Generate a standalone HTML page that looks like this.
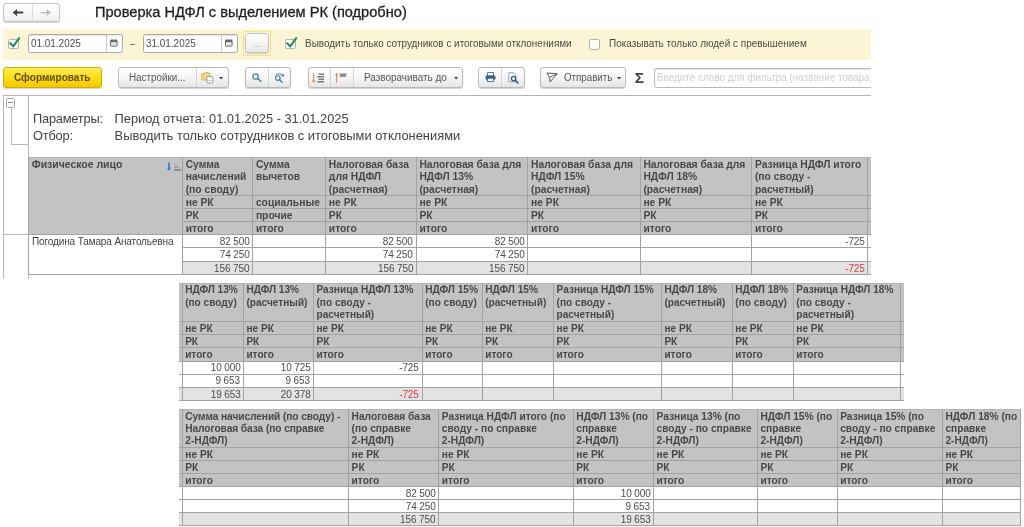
<!DOCTYPE html>
<html lang="ru"><head><meta charset="utf-8"><title>Проверка НДФЛ с выделением РК (подробно)</title>
<style>
html,body{margin:0;padding:0;background:#fff;}
body{width:1024px;height:527px;overflow:hidden;position:relative;font-family:"Liberation Sans",Arial,sans-serif;}
.p{position:absolute;overflow:hidden;}
.b{position:absolute;box-sizing:border-box;}
.t{position:absolute;white-space:nowrap;}
.w{position:absolute;width:1024px;height:527px;will-change:transform;filter:blur(0.4px);}
.btn{position:absolute;box-sizing:border-box;border:1px solid #b9b9b9;border-radius:3px;background:linear-gradient(#ffffff,#f4f4f4 55%,#e6e6e6);box-shadow:0 1px 1px rgba(0,0,0,.18);}
.inp{position:absolute;box-sizing:border-box;border:1px solid #a8a8a8;border-radius:2.5px;background:#fff;}
.cb{position:absolute;box-sizing:border-box;border:1px solid #b3b3b3;border-radius:2px;background:#fff;}
svg{position:absolute;overflow:visible;}
</style></head><body>

<div class="p" style="left:0;top:0;width:871px;height:279px;">
<div class="w" style="left:0;top:0;">
<div class="btn" style="left:3.3px;top:3.2px;width:56.5px;height:18.7px;border-color:#c2c2c2;background:linear-gradient(#ffffff,#f8f8f8 55%,#eeeeee);"></div>
<div class="b" style="left:31.70px;top:4.20px;width:1.00px;height:16.40px;background:#dcdcdc;"></div>
<svg style="left:12px;top:8px;" width="12" height="9" viewBox="0 0 12 9"><path d="M0.8 4.6 L5 0.9 V3.6 H11.2 V5.6 H5 V8.3 Z" fill="#3d3d3d"/></svg>
<svg style="left:40px;top:8px;" width="12" height="9" viewBox="0 0 12 9"><path d="M10.8 4.6 L6.8 1.2 V3.9 H0.6 V5.3 H6.8 V8 Z" fill="#b9b9b9"/></svg>
<div class="t" style="top:3.42px;font-size:14.328px;line-height:18.63px;color:#1f1f1f;left:94.90px;transform:scaleX(1.0204);transform-origin:0 0;-webkit-text-stroke:0.3px #1f1f1f;">Проверка НДФЛ с выделением РК (подробно)</div>
<div class="b" style="left:3.00px;top:29.00px;width:868.00px;height:30.50px;background:#fcf5d5;"></div>
<div class="cb" style="left:8.2px;top:39px;width:11.0px;height:10.399999999999999px;"></div>
<svg style="left:8.2px;top:36px;" width="14" height="14" viewBox="0 0 14 14"><path d="M2.2 7.2 L5.2 10.4 L11.2 2.2" fill="none" stroke="#1e8f55" stroke-width="2.1" stroke-linecap="round" stroke-linejoin="round"/></svg>
<div class="inp" style="left:28.2px;top:34px;width:94.39999999999999px;height:19px;box-shadow:inset 0 1px 1px rgba(0,0,0,.10);"></div>
<div class="b" style="left:105.70px;top:35.00px;width:1.00px;height:17.00px;background:#c9c9c9;"></div>
<div class="t" style="top:37.09px;font-size:10.547px;line-height:13.71px;color:#4c4c4c;left:31.20px;transform:scaleX(0.9434);transform-origin:0 0;">01.01.2025</div>
<svg style="left:109.6px;top:39.3px;" width="8" height="8" viewBox="0 0 8 8"><rect x="0.5" y="1.2" width="6.6" height="6" rx="0.8" fill="#e4e4e4" stroke="#6c6c6c" stroke-width="1"/><rect x="0.5" y="1.2" width="6.6" height="1.9" fill="#666"/><path d="M2 0.2 V1.4 M5.6 0.2 V1.4" stroke="#666" stroke-width="1"/></svg>
<div class="b" style="left:130.20px;top:43.50px;width:5.30px;height:1.20px;background:#7a7a7a;"></div>
<div class="inp" style="left:143.3px;top:34px;width:94.69999999999999px;height:19px;box-shadow:inset 0 1px 1px rgba(0,0,0,.10);"></div>
<div class="b" style="left:221.10px;top:35.00px;width:1.00px;height:17.00px;background:#c9c9c9;"></div>
<div class="t" style="top:37.09px;font-size:10.547px;line-height:13.71px;color:#4c4c4c;left:146.30px;transform:scaleX(0.9434);transform-origin:0 0;">31.01.2025</div>
<svg style="left:225.0px;top:39.3px;" width="8" height="8" viewBox="0 0 8 8"><rect x="0.5" y="1.2" width="6.6" height="6" rx="0.8" fill="#e4e4e4" stroke="#6c6c6c" stroke-width="1"/><rect x="0.5" y="1.2" width="6.6" height="1.9" fill="#666"/><path d="M2 0.2 V1.4 M5.6 0.2 V1.4" stroke="#666" stroke-width="1"/></svg>
<div class="b" style="left:243.00px;top:31.20px;width:27.80px;height:24.80px;border:1px solid #f3e27c;border-radius:1px;background:#fdf8dc;"></div>
<div class="btn" style="left:245.3px;top:33.3px;width:23.4px;height:20px;border-color:#c4c4c4;"></div>
<div class="t" style="top:38.13px;font-size:9.5px;line-height:12.35px;color:#b4b4b4;left:253.40px;">...</div>
<div class="cb" style="left:285.2px;top:39px;width:11.0px;height:10.399999999999999px;"></div>
<svg style="left:285.2px;top:36px;" width="14" height="14" viewBox="0 0 14 14"><path d="M2.2 7.2 L5.2 10.4 L11.2 2.2" fill="none" stroke="#1e8f55" stroke-width="2.1" stroke-linecap="round" stroke-linejoin="round"/></svg>
<div class="t" style="top:37.09px;font-size:10.547px;line-height:13.71px;color:#4a4a4a;left:304.90px;transform:scaleX(0.9434);transform-origin:0 0;">Выводить только сотрудников с итоговыми отклонениями</div>
<div class="cb" style="left:588.8px;top:39px;width:11.200000000000045px;height:10.799999999999997px;"></div>
<div class="t" style="top:37.05px;font-size:10.589px;line-height:13.77px;color:#4a4a4a;left:608.70px;transform:scaleX(0.9434);transform-origin:0 0;">Показывать только людей с превышением</div>
<div class="btn" style="left:3px;top:67.3px;width:98.6px;height:20.3px;border-color:#cfae00;background:linear-gradient(#ffee55,#fcdc14 50%,#f3c800);"></div>
<div class="t" style="top:70.88px;font-size:10.653px;line-height:13.85px;color:#5f4f16;font-weight:bold;left:13.75px;transform:scaleX(0.9434);transform-origin:0 0;">Сформировать</div>
<div class="btn" style="left:118px;top:67.3px;width:110.5px;height:20.3px;"></div>
<div class="b" style="left:195.60px;top:68.30px;width:1.00px;height:18.30px;background:#d4d4d4;"></div>
<div class="t" style="top:71.10px;font-size:10.441px;line-height:13.57px;color:#555;left:128.60px;transform:scaleX(0.9434);transform-origin:0 0;">Настройки...</div>
<svg style="left:200.6px;top:71px;" width="13" height="13" viewBox="0 0 13 13"><path d="M0.9 2.6 h2.6 l0.8 -1.2 h3 v1.2 h1.8 v6.4 h-8.2 z" fill="#f6dc9a" stroke="#d9a93f" stroke-width="0.9"/><path d="M3.2 3.2 v5.6 M5.6 2.4 v6.4" stroke="#e3b95a" stroke-width="0.7"/><rect x="5.9" y="5.4" width="6" height="6.6" rx="1" fill="#fff" stroke="#8a8f98" stroke-width="0.9"/><path d="M7.6 9.6 h2.6" stroke="#9aa0aa" stroke-width="0.8"/></svg>
<svg style="left:219.2px;top:77.4px;" width="4.2" height="2.4" viewBox="0 0 4.2 2.4"><path d="M0 0 H4.2 L2.1 2.4 Z" fill="#444"/></svg>
<div class="btn" style="left:245.3px;top:67.3px;width:45.4px;height:20.3px;"></div>
<div class="b" style="left:268.00px;top:68.30px;width:1.00px;height:18.30px;background:#d4d4d4;"></div>
<svg style="left:251.6px;top:73.3px;" width="10" height="9" viewBox="0 0 10 9"><circle cx="3.6" cy="3.5" r="2.6" fill="#fff" stroke="#3b7fa6" stroke-width="1.25"/><path d="M5.6 5.5 L8.8 8.3" stroke="#3b7fa6" stroke-width="1.5" stroke-linecap="round"/></svg>
<svg style="left:274.4px;top:72.6px;" width="11" height="10" viewBox="0 0 11 10"><circle cx="3.8" cy="5" r="2.3" fill="#fff" stroke="#3b7fa6" stroke-width="1.15"/><path d="M5.6 6.8 L8 9.3" stroke="#3b7fa6" stroke-width="1.4" stroke-linecap="round"/><path d="M1.6 1.9 C3.6 0.2 7 0.4 8.6 2.4" fill="none" stroke="#3b7fa6" stroke-width="1"/><path d="M10.2 1 L9.6 3.9 L7.2 2.6 Z" fill="#2f6f99"/></svg>
<div class="btn" style="left:307.6px;top:67.3px;width:155px;height:20.3px;"></div>
<div class="b" style="left:330.20px;top:68.30px;width:1.00px;height:18.30px;background:#d4d4d4;"></div>
<div class="b" style="left:353.00px;top:68.30px;width:1.00px;height:18.30px;background:#d4d4d4;"></div>
<svg style="left:312px;top:72.8px;" width="13" height="10" viewBox="0 0 13 10"><path d="M1.7 0.2 V9 M0.4 7.4 L1.7 9.5 L3 7.4" fill="none" stroke="#e2805a" stroke-width="1"/><path d="M6.6 1.2 h5.4 M5.2 3.7 h6.8 M6.6 6.2 h5.4 M5.2 8.7 h6.8" stroke="#7a7a7a" stroke-width="1.4"/></svg>
<svg style="left:335.2px;top:72.6px;" width="13" height="10" viewBox="0 0 13 10"><path d="M1.6 9.8 V0.8 M0.3 2.4 L1.6 0.3 L2.9 2.4" fill="none" stroke="#e2805a" stroke-width="1"/><path d="M4.8 1.1 h6.4 M4.8 3 h6.4" stroke="#6e6e6e" stroke-width="1.3"/></svg>
<div class="t" style="top:70.99px;font-size:10.547px;line-height:13.71px;color:#555;left:363.80px;transform:scaleX(0.9434);transform-origin:0 0;">Разворачивать до</div>
<svg style="left:453.6px;top:77.4px;" width="4.2" height="2.4" viewBox="0 0 4.2 2.4"><path d="M0 0 H4.2 L2.1 2.4 Z" fill="#444"/></svg>
<div class="btn" style="left:478.3px;top:67.3px;width:46.3px;height:20.3px;"></div>
<div class="b" style="left:501.20px;top:68.30px;width:1.00px;height:18.30px;background:#d4d4d4;"></div>
<svg style="left:484.8px;top:72px;" width="11" height="10" viewBox="0 0 11 10"><rect x="2.6" y="0.6" width="5.8" height="3.4" fill="#fff" stroke="#44658a" stroke-width="0.9"/><rect x="0.5" y="3.6" width="10" height="4.2" rx="1.2" fill="#3f628a"/><rect x="2.6" y="6.2" width="5.8" height="3.4" fill="#fff" stroke="#44658a" stroke-width="0.9"/></svg>
<svg style="left:507.8px;top:71.8px;" width="11" height="12" viewBox="0 0 11 12"><path d="M0.8 0.6 h4.6 l2.2 2.2 v7 h-6.8 z" fill="#fff" stroke="#8a8a8a" stroke-width="0.8"/><circle cx="5.6" cy="6.6" r="2.2" fill="#fff" stroke="#2d5c8c" stroke-width="1.4"/><path d="M7.3 8.3 L9.8 10.9" stroke="#2d5c8c" stroke-width="1.6" stroke-linecap="round"/></svg>
<div class="btn" style="left:539.8px;top:67.3px;width:86.2px;height:20.3px;"></div>
<svg style="left:546px;top:72.4px;" width="12" height="11" viewBox="0 0 12 11"><path d="M0.8 1 L11.2 1.8 L4 10 L3.6 5.2 Z M3.6 5.2 L11.2 1.8" fill="#fff" stroke="#5a5a5a" stroke-width="1" stroke-linejoin="round"/></svg>
<div class="t" style="top:71.20px;font-size:10.335px;line-height:13.44px;color:#555;left:564.00px;transform:scaleX(0.9434);transform-origin:0 0;">Отправить</div>
<svg style="left:617px;top:77.4px;" width="4.2" height="2.4" viewBox="0 0 4.2 2.4"><path d="M0 0 H4.2 L2.1 2.4 Z" fill="#444"/></svg>
<div class="t" style="top:68.15px;font-size:15.5px;line-height:20.15px;color:#39434f;font-weight:bold;left:634.70px;">Σ</div>
<div class="inp" style="left:653.7px;top:68px;width:260px;height:19.5px;border-color:#b8b8b8;box-shadow:inset 0 1px 1px rgba(0,0,0,.10);"></div>
<div class="t" style="top:71.04px;font-size:10.494px;line-height:13.64px;color:#cfcfcf;left:656.70px;transform:scaleX(0.9434);transform-origin:0 0;">Введите слово для фильтра (название товара,</div>
<div class="b" style="left:3.00px;top:94.50px;width:868.00px;height:1.00px;background:#b4b4b4;"></div>
<div class="b" style="left:2.50px;top:95.00px;width:1.00px;height:184.00px;background:#b4b4b4;"></div>
<div class="b" style="left:28.10px;top:95.00px;width:1.00px;height:184.00px;background:#b4b4b4;"></div>
<div class="b" style="left:5.90px;top:97.60px;width:9.50px;height:10.20px;border:1px solid #a5a5a5;border-radius:1.5px;background:#fff;"></div>
<div class="b" style="left:7.80px;top:102.00px;width:5.70px;height:1.40px;background:#858585;"></div>
<div class="b" style="left:10.90px;top:107.50px;width:1.00px;height:37.10px;background:#b9b9b9;"></div>
<div class="b" style="left:10.90px;top:143.70px;width:17.70px;height:1.00px;background:#b9b9b9;"></div>
<div class="t" style="top:110.94px;font-size:12.8px;line-height:16.64px;color:#424242;letter-spacing:-0.200px;left:33.00px;">Параметры:</div>
<div class="t" style="top:110.94px;font-size:12.8px;line-height:16.64px;color:#424242;left:114.60px;">Период отчета: 01.01.2025 - 31.01.2025</div>
<div class="t" style="top:128.44px;font-size:12.8px;line-height:16.64px;color:#424242;letter-spacing:-0.200px;left:33.00px;">Отбор:</div>
<div class="t" style="top:128.37px;font-size:12.88px;line-height:16.74px;color:#424242;left:114.60px;">Выводить только сотрудников с итоговыми отклонениями</div>
<div class="b" style="left:28.60px;top:156.70px;width:842.40px;height:77.90px;background:#c3c3c3;"></div>
<div class="b" style="left:182.50px;top:261.20px;width:688.50px;height:13.20px;background:#e3e3e3;"></div>
<div class="b" style="left:28.60px;top:156.70px;width:842.40px;height:1.00px;background:#b4b4b4;"></div>
<div class="b" style="left:182.50px;top:195.10px;width:688.50px;height:1.00px;background:#a2a2a2;"></div>
<div class="b" style="left:182.50px;top:208.30px;width:688.50px;height:1.00px;background:#a2a2a2;"></div>
<div class="b" style="left:182.50px;top:221.40px;width:688.50px;height:1.00px;background:#a2a2a2;"></div>
<div class="b" style="left:28.60px;top:234.10px;width:842.40px;height:1.00px;background:#a2a2a2;"></div>
<div class="b" style="left:182.50px;top:247.10px;width:688.50px;height:1.00px;background:#a2a2a2;"></div>
<div class="b" style="left:182.50px;top:260.70px;width:688.50px;height:1.00px;background:#a2a2a2;"></div>
<div class="b" style="left:28.60px;top:273.90px;width:842.40px;height:1.00px;background:#a2a2a2;"></div>
<div class="b" style="left:28.10px;top:157.20px;width:1.00px;height:117.20px;background:#a2a2a2;"></div>
<div class="b" style="left:182.00px;top:157.20px;width:1.00px;height:117.20px;background:#a2a2a2;"></div>
<div class="b" style="left:252.20px;top:157.20px;width:1.00px;height:117.20px;background:#a2a2a2;"></div>
<div class="b" style="left:325.15px;top:157.20px;width:1.00px;height:117.20px;background:#a2a2a2;"></div>
<div class="b" style="left:415.70px;top:157.20px;width:1.00px;height:117.20px;background:#a2a2a2;"></div>
<div class="b" style="left:527.30px;top:157.20px;width:1.00px;height:117.20px;background:#a2a2a2;"></div>
<div class="b" style="left:639.70px;top:157.20px;width:1.00px;height:117.20px;background:#a2a2a2;"></div>
<div class="b" style="left:751.25px;top:157.20px;width:1.00px;height:117.20px;background:#a2a2a2;"></div>
<div class="b" style="left:867.00px;top:157.20px;width:1.00px;height:117.20px;background:#a2a2a2;"></div>
<div class="t" style="top:157.59px;font-size:10.45px;line-height:13.58px;color:#484848;font-weight:bold;left:31.80px;">Физическое лицо</div>
<div class="t" style="top:158.14px;font-size:10.3px;line-height:13.39px;color:#484848;font-weight:bold;left:185.70px;">Сумма</div>
<div class="t" style="top:170.44px;font-size:10.3px;line-height:13.39px;color:#484848;font-weight:bold;left:185.70px;">начислений</div>
<div class="t" style="top:182.74px;font-size:10.3px;line-height:13.39px;color:#484848;font-weight:bold;left:185.70px;">(по своду)</div>
<div class="t" style="top:196.14px;font-size:10.3px;line-height:13.39px;color:#484848;font-weight:bold;left:185.70px;">не РК</div>
<div class="t" style="top:209.34px;font-size:10.3px;line-height:13.39px;color:#484848;font-weight:bold;left:185.70px;">РК</div>
<div class="t" style="top:222.44px;font-size:10.3px;line-height:13.39px;color:#484848;font-weight:bold;left:185.70px;">итого</div>
<div class="t" style="top:158.14px;font-size:10.3px;line-height:13.39px;color:#484848;font-weight:bold;left:255.90px;">Сумма</div>
<div class="t" style="top:170.44px;font-size:10.3px;line-height:13.39px;color:#484848;font-weight:bold;left:255.90px;">вычетов</div>
<div class="t" style="top:196.14px;font-size:10.3px;line-height:13.39px;color:#484848;font-weight:bold;left:255.90px;">социальные</div>
<div class="t" style="top:209.34px;font-size:10.3px;line-height:13.39px;color:#484848;font-weight:bold;left:255.90px;">прочие</div>
<div class="t" style="top:222.44px;font-size:10.3px;line-height:13.39px;color:#484848;font-weight:bold;left:255.90px;">итого</div>
<div class="t" style="top:158.14px;font-size:10.3px;line-height:13.39px;color:#484848;font-weight:bold;left:328.85px;">Налоговая база</div>
<div class="t" style="top:170.44px;font-size:10.3px;line-height:13.39px;color:#484848;font-weight:bold;left:328.85px;">для НДФЛ</div>
<div class="t" style="top:182.74px;font-size:10.3px;line-height:13.39px;color:#484848;font-weight:bold;left:328.85px;">(расчетная)</div>
<div class="t" style="top:196.14px;font-size:10.3px;line-height:13.39px;color:#484848;font-weight:bold;left:328.85px;">не РК</div>
<div class="t" style="top:209.34px;font-size:10.3px;line-height:13.39px;color:#484848;font-weight:bold;left:328.85px;">РК</div>
<div class="t" style="top:222.44px;font-size:10.3px;line-height:13.39px;color:#484848;font-weight:bold;left:328.85px;">итого</div>
<div class="t" style="top:158.14px;font-size:10.3px;line-height:13.39px;color:#484848;font-weight:bold;left:419.40px;">Налоговая база для</div>
<div class="t" style="top:170.44px;font-size:10.3px;line-height:13.39px;color:#484848;font-weight:bold;left:419.40px;">НДФЛ 13%</div>
<div class="t" style="top:182.74px;font-size:10.3px;line-height:13.39px;color:#484848;font-weight:bold;left:419.40px;">(расчетная)</div>
<div class="t" style="top:196.14px;font-size:10.3px;line-height:13.39px;color:#484848;font-weight:bold;left:419.40px;">не РК</div>
<div class="t" style="top:209.34px;font-size:10.3px;line-height:13.39px;color:#484848;font-weight:bold;left:419.40px;">РК</div>
<div class="t" style="top:222.44px;font-size:10.3px;line-height:13.39px;color:#484848;font-weight:bold;left:419.40px;">итого</div>
<div class="t" style="top:158.14px;font-size:10.3px;line-height:13.39px;color:#484848;font-weight:bold;left:531.00px;">Налоговая база для</div>
<div class="t" style="top:170.44px;font-size:10.3px;line-height:13.39px;color:#484848;font-weight:bold;left:531.00px;">НДФЛ 15%</div>
<div class="t" style="top:182.74px;font-size:10.3px;line-height:13.39px;color:#484848;font-weight:bold;left:531.00px;">(расчетная)</div>
<div class="t" style="top:196.14px;font-size:10.3px;line-height:13.39px;color:#484848;font-weight:bold;left:531.00px;">не РК</div>
<div class="t" style="top:209.34px;font-size:10.3px;line-height:13.39px;color:#484848;font-weight:bold;left:531.00px;">РК</div>
<div class="t" style="top:222.44px;font-size:10.3px;line-height:13.39px;color:#484848;font-weight:bold;left:531.00px;">итого</div>
<div class="t" style="top:158.14px;font-size:10.3px;line-height:13.39px;color:#484848;font-weight:bold;left:643.40px;">Налоговая база для</div>
<div class="t" style="top:170.44px;font-size:10.3px;line-height:13.39px;color:#484848;font-weight:bold;left:643.40px;">НДФЛ 18%</div>
<div class="t" style="top:182.74px;font-size:10.3px;line-height:13.39px;color:#484848;font-weight:bold;left:643.40px;">(расчетная)</div>
<div class="t" style="top:196.14px;font-size:10.3px;line-height:13.39px;color:#484848;font-weight:bold;left:643.40px;">не РК</div>
<div class="t" style="top:209.34px;font-size:10.3px;line-height:13.39px;color:#484848;font-weight:bold;left:643.40px;">РК</div>
<div class="t" style="top:222.44px;font-size:10.3px;line-height:13.39px;color:#484848;font-weight:bold;left:643.40px;">итого</div>
<div class="t" style="top:158.14px;font-size:10.3px;line-height:13.39px;color:#484848;font-weight:bold;left:754.95px;">Разница НДФЛ итого</div>
<div class="t" style="top:170.44px;font-size:10.3px;line-height:13.39px;color:#484848;font-weight:bold;left:754.95px;">(по своду -</div>
<div class="t" style="top:182.74px;font-size:10.3px;line-height:13.39px;color:#484848;font-weight:bold;left:754.95px;">расчетный)</div>
<div class="t" style="top:196.14px;font-size:10.3px;line-height:13.39px;color:#484848;font-weight:bold;left:754.95px;">не РК</div>
<div class="t" style="top:209.34px;font-size:10.3px;line-height:13.39px;color:#484848;font-weight:bold;left:754.95px;">РК</div>
<div class="t" style="top:222.44px;font-size:10.3px;line-height:13.39px;color:#484848;font-weight:bold;left:754.95px;">итого</div>
<div class="t" style="top:158.14px;font-size:10.3px;line-height:13.39px;color:#484848;font-weight:bold;left:870.70px;"></div>
<div class="t" style="top:170.44px;font-size:10.3px;line-height:13.39px;color:#484848;font-weight:bold;left:870.70px;">(</div>
<div class="t" style="top:234.94px;font-size:10.6px;line-height:13.78px;color:#3f3f3f;letter-spacing:-0.127px;left:32.10px;transform:scaleX(0.9434);transform-origin:0 0;">Погодина Тамара Анатольевна</div>
<div class="t" style="top:234.94px;font-size:10.6px;line-height:13.78px;color:#4c4c4c;letter-spacing:-0.127px;right:774.50px;text-align:right;transform:scaleX(0.9434);transform-origin:100% 0;">82 500</div>
<div class="t" style="top:234.94px;font-size:10.6px;line-height:13.78px;color:#4c4c4c;letter-spacing:-0.127px;right:611.00px;text-align:right;transform:scaleX(0.9434);transform-origin:100% 0;">82 500</div>
<div class="t" style="top:234.94px;font-size:10.6px;line-height:13.78px;color:#4c4c4c;letter-spacing:-0.127px;right:499.40px;text-align:right;transform:scaleX(0.9434);transform-origin:100% 0;">82 500</div>
<div class="t" style="top:234.94px;font-size:10.6px;line-height:13.78px;color:#4c4c4c;letter-spacing:-0.127px;right:159.70px;text-align:right;transform:scaleX(0.9434);transform-origin:100% 0;">-725</div>
<div class="t" style="top:247.94px;font-size:10.6px;line-height:13.78px;color:#4c4c4c;letter-spacing:-0.127px;right:774.50px;text-align:right;transform:scaleX(0.9434);transform-origin:100% 0;">74 250</div>
<div class="t" style="top:247.94px;font-size:10.6px;line-height:13.78px;color:#4c4c4c;letter-spacing:-0.127px;right:611.00px;text-align:right;transform:scaleX(0.9434);transform-origin:100% 0;">74 250</div>
<div class="t" style="top:247.94px;font-size:10.6px;line-height:13.78px;color:#4c4c4c;letter-spacing:-0.127px;right:499.40px;text-align:right;transform:scaleX(0.9434);transform-origin:100% 0;">74 250</div>
<div class="t" style="top:261.54px;font-size:10.6px;line-height:13.78px;color:#4c4c4c;letter-spacing:-0.127px;right:774.50px;text-align:right;transform:scaleX(0.9434);transform-origin:100% 0;">156 750</div>
<div class="t" style="top:261.54px;font-size:10.6px;line-height:13.78px;color:#4c4c4c;letter-spacing:-0.127px;right:611.00px;text-align:right;transform:scaleX(0.9434);transform-origin:100% 0;">156 750</div>
<div class="t" style="top:261.54px;font-size:10.6px;line-height:13.78px;color:#4c4c4c;letter-spacing:-0.127px;right:499.40px;text-align:right;transform:scaleX(0.9434);transform-origin:100% 0;">156 750</div>
<div class="t" style="top:261.54px;font-size:10.6px;line-height:13.78px;color:#e0393e;letter-spacing:-0.127px;right:159.70px;text-align:right;transform:scaleX(0.9434);transform-origin:100% 0;">-725</div>
<div class="b" style="left:3.00px;top:234.10px;width:26.00px;height:1.00px;background:#b4b4b4;"></div>
<svg style="left:166.6px;top:162.4px;" width="15" height="10" viewBox="0 0 15 10"><path d="M2 0.4 V7.6" fill="none" stroke="#3580c6" stroke-width="1.7"/><path d="M0 5.8 H4 L2 8.9 Z" fill="#3580c6"/><path d="M7.4 0.6 h1.4" stroke="#aaa" stroke-width="0.8"/><path d="M7.4 2.8 h2.8" stroke="#a0a0a0" stroke-width="0.9"/><path d="M7.4 5.2 h4.6" stroke="#8c8c8c" stroke-width="1"/><path d="M7.2 7.9 h7" stroke="#707070" stroke-width="1.3"/></svg>
</div></div>
<div class="p" style="left:179.3px;top:282.7px;width:724.7px;height:118.1px;">
<div class="w" style="left:-179.3px;top:-282.7px;">
<div class="b" style="left:179.00px;top:282.70px;width:725.00px;height:78.30px;background:#c3c3c3;"></div>
<div class="b" style="left:179.00px;top:387.20px;width:725.00px;height:13.10px;background:#e3e3e3;"></div>
<div class="b" style="left:179.00px;top:282.70px;width:725.00px;height:1.00px;background:#b4b4b4;"></div>
<div class="b" style="left:179.00px;top:320.80px;width:725.00px;height:1.00px;background:#a2a2a2;"></div>
<div class="b" style="left:179.00px;top:334.00px;width:725.00px;height:1.00px;background:#a2a2a2;"></div>
<div class="b" style="left:179.00px;top:347.40px;width:725.00px;height:1.00px;background:#a2a2a2;"></div>
<div class="b" style="left:179.00px;top:360.50px;width:725.00px;height:1.00px;background:#a2a2a2;"></div>
<div class="b" style="left:179.00px;top:373.50px;width:725.00px;height:1.00px;background:#a2a2a2;"></div>
<div class="b" style="left:179.00px;top:386.70px;width:725.00px;height:1.00px;background:#a2a2a2;"></div>
<div class="b" style="left:179.00px;top:399.80px;width:725.00px;height:1.00px;background:#a2a2a2;"></div>
<div class="b" style="left:182.15px;top:283.20px;width:1.00px;height:117.10px;background:#a2a2a2;"></div>
<div class="b" style="left:242.90px;top:283.20px;width:1.00px;height:117.10px;background:#a2a2a2;"></div>
<div class="b" style="left:313.00px;top:283.20px;width:1.00px;height:117.10px;background:#a2a2a2;"></div>
<div class="b" style="left:421.70px;top:283.20px;width:1.00px;height:117.10px;background:#a2a2a2;"></div>
<div class="b" style="left:481.70px;top:283.20px;width:1.00px;height:117.10px;background:#a2a2a2;"></div>
<div class="b" style="left:553.10px;top:283.20px;width:1.00px;height:117.10px;background:#a2a2a2;"></div>
<div class="b" style="left:660.90px;top:283.20px;width:1.00px;height:117.10px;background:#a2a2a2;"></div>
<div class="b" style="left:731.80px;top:283.20px;width:1.00px;height:117.10px;background:#a2a2a2;"></div>
<div class="b" style="left:792.80px;top:283.20px;width:1.00px;height:117.10px;background:#a2a2a2;"></div>
<div class="b" style="left:900.30px;top:283.20px;width:1.00px;height:117.10px;background:#a2a2a2;"></div>
<div class="t" style="top:283.44px;font-size:10.1px;line-height:13.13px;color:#484848;font-weight:bold;left:185.15px;">НДФЛ 13%</div>
<div class="t" style="top:295.94px;font-size:10.1px;line-height:13.13px;color:#484848;font-weight:bold;left:185.15px;">(по своду)</div>
<div class="t" style="top:321.64px;font-size:10.1px;line-height:13.13px;color:#484848;font-weight:bold;left:185.15px;">не РК</div>
<div class="t" style="top:334.84px;font-size:10.1px;line-height:13.13px;color:#484848;font-weight:bold;left:185.15px;">РК</div>
<div class="t" style="top:348.24px;font-size:10.1px;line-height:13.13px;color:#484848;font-weight:bold;left:185.15px;">итого</div>
<div class="t" style="top:283.44px;font-size:10.1px;line-height:13.13px;color:#484848;font-weight:bold;left:246.40px;">НДФЛ 13%</div>
<div class="t" style="top:295.94px;font-size:10.1px;line-height:13.13px;color:#484848;font-weight:bold;left:246.40px;">(расчетный)</div>
<div class="t" style="top:321.64px;font-size:10.1px;line-height:13.13px;color:#484848;font-weight:bold;left:246.40px;">не РК</div>
<div class="t" style="top:334.84px;font-size:10.1px;line-height:13.13px;color:#484848;font-weight:bold;left:246.40px;">РК</div>
<div class="t" style="top:348.24px;font-size:10.1px;line-height:13.13px;color:#484848;font-weight:bold;left:246.40px;">итого</div>
<div class="t" style="top:283.44px;font-size:10.1px;line-height:13.13px;color:#484848;font-weight:bold;left:316.50px;">Разница НДФЛ 13%</div>
<div class="t" style="top:295.94px;font-size:10.1px;line-height:13.13px;color:#484848;font-weight:bold;left:316.50px;">(по своду -</div>
<div class="t" style="top:308.44px;font-size:10.1px;line-height:13.13px;color:#484848;font-weight:bold;left:316.50px;">расчетный)</div>
<div class="t" style="top:321.64px;font-size:10.1px;line-height:13.13px;color:#484848;font-weight:bold;left:316.50px;">не РК</div>
<div class="t" style="top:334.84px;font-size:10.1px;line-height:13.13px;color:#484848;font-weight:bold;left:316.50px;">РК</div>
<div class="t" style="top:348.24px;font-size:10.1px;line-height:13.13px;color:#484848;font-weight:bold;left:316.50px;">итого</div>
<div class="t" style="top:283.44px;font-size:10.1px;line-height:13.13px;color:#484848;font-weight:bold;left:425.20px;">НДФЛ 15%</div>
<div class="t" style="top:295.94px;font-size:10.1px;line-height:13.13px;color:#484848;font-weight:bold;left:425.20px;">(по своду)</div>
<div class="t" style="top:321.64px;font-size:10.1px;line-height:13.13px;color:#484848;font-weight:bold;left:425.20px;">не РК</div>
<div class="t" style="top:334.84px;font-size:10.1px;line-height:13.13px;color:#484848;font-weight:bold;left:425.20px;">РК</div>
<div class="t" style="top:348.24px;font-size:10.1px;line-height:13.13px;color:#484848;font-weight:bold;left:425.20px;">итого</div>
<div class="t" style="top:283.44px;font-size:10.1px;line-height:13.13px;color:#484848;font-weight:bold;left:485.20px;">НДФЛ 15%</div>
<div class="t" style="top:295.94px;font-size:10.1px;line-height:13.13px;color:#484848;font-weight:bold;left:485.20px;">(расчетный)</div>
<div class="t" style="top:321.64px;font-size:10.1px;line-height:13.13px;color:#484848;font-weight:bold;left:485.20px;">не РК</div>
<div class="t" style="top:334.84px;font-size:10.1px;line-height:13.13px;color:#484848;font-weight:bold;left:485.20px;">РК</div>
<div class="t" style="top:348.24px;font-size:10.1px;line-height:13.13px;color:#484848;font-weight:bold;left:485.20px;">итого</div>
<div class="t" style="top:283.44px;font-size:10.1px;line-height:13.13px;color:#484848;font-weight:bold;left:556.60px;">Разница НДФЛ 15%</div>
<div class="t" style="top:295.94px;font-size:10.1px;line-height:13.13px;color:#484848;font-weight:bold;left:556.60px;">(по своду -</div>
<div class="t" style="top:308.44px;font-size:10.1px;line-height:13.13px;color:#484848;font-weight:bold;left:556.60px;">расчетный)</div>
<div class="t" style="top:321.64px;font-size:10.1px;line-height:13.13px;color:#484848;font-weight:bold;left:556.60px;">не РК</div>
<div class="t" style="top:334.84px;font-size:10.1px;line-height:13.13px;color:#484848;font-weight:bold;left:556.60px;">РК</div>
<div class="t" style="top:348.24px;font-size:10.1px;line-height:13.13px;color:#484848;font-weight:bold;left:556.60px;">итого</div>
<div class="t" style="top:283.44px;font-size:10.1px;line-height:13.13px;color:#484848;font-weight:bold;left:664.40px;">НДФЛ 18%</div>
<div class="t" style="top:295.94px;font-size:10.1px;line-height:13.13px;color:#484848;font-weight:bold;left:664.40px;">(расчетный)</div>
<div class="t" style="top:321.64px;font-size:10.1px;line-height:13.13px;color:#484848;font-weight:bold;left:664.40px;">не РК</div>
<div class="t" style="top:334.84px;font-size:10.1px;line-height:13.13px;color:#484848;font-weight:bold;left:664.40px;">РК</div>
<div class="t" style="top:348.24px;font-size:10.1px;line-height:13.13px;color:#484848;font-weight:bold;left:664.40px;">итого</div>
<div class="t" style="top:283.44px;font-size:10.1px;line-height:13.13px;color:#484848;font-weight:bold;left:735.30px;">НДФЛ 18%</div>
<div class="t" style="top:295.94px;font-size:10.1px;line-height:13.13px;color:#484848;font-weight:bold;left:735.30px;">(по своду)</div>
<div class="t" style="top:321.64px;font-size:10.1px;line-height:13.13px;color:#484848;font-weight:bold;left:735.30px;">не РК</div>
<div class="t" style="top:334.84px;font-size:10.1px;line-height:13.13px;color:#484848;font-weight:bold;left:735.30px;">РК</div>
<div class="t" style="top:348.24px;font-size:10.1px;line-height:13.13px;color:#484848;font-weight:bold;left:735.30px;">итого</div>
<div class="t" style="top:283.44px;font-size:10.1px;line-height:13.13px;color:#484848;font-weight:bold;left:796.30px;">Разница НДФЛ 18%</div>
<div class="t" style="top:295.94px;font-size:10.1px;line-height:13.13px;color:#484848;font-weight:bold;left:796.30px;">(по своду -</div>
<div class="t" style="top:308.44px;font-size:10.1px;line-height:13.13px;color:#484848;font-weight:bold;left:796.30px;">расчетный)</div>
<div class="t" style="top:321.64px;font-size:10.1px;line-height:13.13px;color:#484848;font-weight:bold;left:796.30px;">не РК</div>
<div class="t" style="top:334.84px;font-size:10.1px;line-height:13.13px;color:#484848;font-weight:bold;left:796.30px;">РК</div>
<div class="t" style="top:348.24px;font-size:10.1px;line-height:13.13px;color:#484848;font-weight:bold;left:796.30px;">итого</div>
<div class="t" style="top:283.44px;font-size:10.1px;line-height:13.13px;color:#484848;font-weight:bold;left:903.80px;">С</div>
<div class="t" style="top:295.94px;font-size:10.1px;line-height:13.13px;color:#484848;font-weight:bold;left:903.80px;">Н</div>
<div class="t" style="top:308.44px;font-size:10.1px;line-height:13.13px;color:#484848;font-weight:bold;left:903.80px;">2</div>
<div class="t" style="top:361.34px;font-size:10.6px;line-height:13.78px;color:#4c4c4c;letter-spacing:-0.127px;right:783.80px;text-align:right;transform:scaleX(0.9434);transform-origin:100% 0;">10 000</div>
<div class="t" style="top:361.34px;font-size:10.6px;line-height:13.78px;color:#4c4c4c;letter-spacing:-0.127px;right:713.70px;text-align:right;transform:scaleX(0.9434);transform-origin:100% 0;">10 725</div>
<div class="t" style="top:361.34px;font-size:10.6px;line-height:13.78px;color:#4c4c4c;letter-spacing:-0.127px;right:605.00px;text-align:right;transform:scaleX(0.9434);transform-origin:100% 0;">-725</div>
<div class="t" style="top:374.34px;font-size:10.6px;line-height:13.78px;color:#4c4c4c;letter-spacing:-0.127px;right:783.80px;text-align:right;transform:scaleX(0.9434);transform-origin:100% 0;">9 653</div>
<div class="t" style="top:374.34px;font-size:10.6px;line-height:13.78px;color:#4c4c4c;letter-spacing:-0.127px;right:713.70px;text-align:right;transform:scaleX(0.9434);transform-origin:100% 0;">9 653</div>
<div class="t" style="top:387.54px;font-size:10.6px;line-height:13.78px;color:#4c4c4c;letter-spacing:-0.127px;right:783.80px;text-align:right;transform:scaleX(0.9434);transform-origin:100% 0;">19 653</div>
<div class="t" style="top:387.54px;font-size:10.6px;line-height:13.78px;color:#4c4c4c;letter-spacing:-0.127px;right:713.70px;text-align:right;transform:scaleX(0.9434);transform-origin:100% 0;">20 378</div>
<div class="t" style="top:387.54px;font-size:10.6px;line-height:13.78px;color:#e0393e;letter-spacing:-0.127px;right:605.00px;text-align:right;transform:scaleX(0.9434);transform-origin:100% 0;">-725</div>
</div></div>
<div class="p" style="left:179.3px;top:408.5px;width:842px;height:117.5px;">
<div class="w" style="left:-179.3px;top:-408.5px;">
<div class="b" style="left:179.00px;top:408.50px;width:842.00px;height:78.30px;background:#c3c3c3;"></div>
<div class="b" style="left:179.00px;top:512.50px;width:842.00px;height:12.50px;background:#e3e3e3;"></div>
<div class="b" style="left:179.00px;top:408.50px;width:842.00px;height:1.00px;background:#b4b4b4;"></div>
<div class="b" style="left:179.00px;top:446.80px;width:842.00px;height:1.00px;background:#a2a2a2;"></div>
<div class="b" style="left:179.00px;top:460.00px;width:842.00px;height:1.00px;background:#a2a2a2;"></div>
<div class="b" style="left:179.00px;top:473.20px;width:842.00px;height:1.00px;background:#a2a2a2;"></div>
<div class="b" style="left:179.00px;top:486.30px;width:842.00px;height:1.00px;background:#a2a2a2;"></div>
<div class="b" style="left:179.00px;top:499.10px;width:842.00px;height:1.00px;background:#a2a2a2;"></div>
<div class="b" style="left:179.00px;top:512.00px;width:842.00px;height:1.00px;background:#a2a2a2;"></div>
<div class="b" style="left:179.00px;top:524.50px;width:842.00px;height:1.00px;background:#a2a2a2;"></div>
<div class="b" style="left:182.15px;top:409.00px;width:1.00px;height:116.00px;background:#a2a2a2;"></div>
<div class="b" style="left:348.00px;top:409.00px;width:1.00px;height:116.00px;background:#a2a2a2;"></div>
<div class="b" style="left:438.20px;top:409.00px;width:1.00px;height:116.00px;background:#a2a2a2;"></div>
<div class="b" style="left:572.70px;top:409.00px;width:1.00px;height:116.00px;background:#a2a2a2;"></div>
<div class="b" style="left:652.90px;top:409.00px;width:1.00px;height:116.00px;background:#a2a2a2;"></div>
<div class="b" style="left:756.80px;top:409.00px;width:1.00px;height:116.00px;background:#a2a2a2;"></div>
<div class="b" style="left:836.60px;top:409.00px;width:1.00px;height:116.00px;background:#a2a2a2;"></div>
<div class="b" style="left:941.80px;top:409.00px;width:1.00px;height:116.00px;background:#a2a2a2;"></div>
<div class="b" style="left:1020.30px;top:409.00px;width:1.00px;height:116.00px;background:#a2a2a2;"></div>
<div class="t" style="top:410.04px;font-size:10.2px;line-height:13.26px;color:#484848;font-weight:bold;letter-spacing:-0.090px;left:185.25px;">Сумма начислений (по своду) -</div>
<div class="t" style="top:421.94px;font-size:10.2px;line-height:13.26px;color:#484848;font-weight:bold;letter-spacing:-0.090px;left:185.25px;">Налоговая база (по справке</div>
<div class="t" style="top:433.84px;font-size:10.2px;line-height:13.26px;color:#484848;font-weight:bold;left:185.25px;">2-НДФЛ)</div>
<div class="t" style="top:447.54px;font-size:10.2px;line-height:13.26px;color:#484848;font-weight:bold;left:185.25px;">не РК</div>
<div class="t" style="top:460.74px;font-size:10.2px;line-height:13.26px;color:#484848;font-weight:bold;left:185.25px;">РК</div>
<div class="t" style="top:473.94px;font-size:10.2px;line-height:13.26px;color:#484848;font-weight:bold;left:185.25px;">итого</div>
<div class="t" style="top:410.04px;font-size:10.2px;line-height:13.26px;color:#484848;font-weight:bold;left:351.60px;">Налоговая база</div>
<div class="t" style="top:421.94px;font-size:10.2px;line-height:13.26px;color:#484848;font-weight:bold;left:351.60px;">(по справке</div>
<div class="t" style="top:433.84px;font-size:10.2px;line-height:13.26px;color:#484848;font-weight:bold;left:351.60px;">2-НДФЛ)</div>
<div class="t" style="top:447.54px;font-size:10.2px;line-height:13.26px;color:#484848;font-weight:bold;left:351.60px;">не РК</div>
<div class="t" style="top:460.74px;font-size:10.2px;line-height:13.26px;color:#484848;font-weight:bold;left:351.60px;">РК</div>
<div class="t" style="top:473.94px;font-size:10.2px;line-height:13.26px;color:#484848;font-weight:bold;left:351.60px;">итого</div>
<div class="t" style="top:410.04px;font-size:10.2px;line-height:13.26px;color:#484848;font-weight:bold;left:441.80px;">Разница НДФЛ итого (по</div>
<div class="t" style="top:421.94px;font-size:10.2px;line-height:13.26px;color:#484848;font-weight:bold;left:441.80px;">своду - по справке</div>
<div class="t" style="top:433.84px;font-size:10.2px;line-height:13.26px;color:#484848;font-weight:bold;left:441.80px;">2-НДФЛ)</div>
<div class="t" style="top:447.54px;font-size:10.2px;line-height:13.26px;color:#484848;font-weight:bold;left:441.80px;">не РК</div>
<div class="t" style="top:460.74px;font-size:10.2px;line-height:13.26px;color:#484848;font-weight:bold;left:441.80px;">РК</div>
<div class="t" style="top:473.94px;font-size:10.2px;line-height:13.26px;color:#484848;font-weight:bold;left:441.80px;">итого</div>
<div class="t" style="top:410.04px;font-size:10.2px;line-height:13.26px;color:#484848;font-weight:bold;left:576.30px;">НДФЛ 13% (по</div>
<div class="t" style="top:421.94px;font-size:10.2px;line-height:13.26px;color:#484848;font-weight:bold;left:576.30px;">справке</div>
<div class="t" style="top:433.84px;font-size:10.2px;line-height:13.26px;color:#484848;font-weight:bold;left:576.30px;">2-НДФЛ)</div>
<div class="t" style="top:447.54px;font-size:10.2px;line-height:13.26px;color:#484848;font-weight:bold;left:576.30px;">не РК</div>
<div class="t" style="top:460.74px;font-size:10.2px;line-height:13.26px;color:#484848;font-weight:bold;left:576.30px;">РК</div>
<div class="t" style="top:473.94px;font-size:10.2px;line-height:13.26px;color:#484848;font-weight:bold;left:576.30px;">итого</div>
<div class="t" style="top:410.04px;font-size:10.2px;line-height:13.26px;color:#484848;font-weight:bold;left:656.50px;">Разница 13% (по</div>
<div class="t" style="top:421.94px;font-size:10.2px;line-height:13.26px;color:#484848;font-weight:bold;left:656.50px;">своду - по справке</div>
<div class="t" style="top:433.84px;font-size:10.2px;line-height:13.26px;color:#484848;font-weight:bold;left:656.50px;">2-НДФЛ)</div>
<div class="t" style="top:447.54px;font-size:10.2px;line-height:13.26px;color:#484848;font-weight:bold;left:656.50px;">не РК</div>
<div class="t" style="top:460.74px;font-size:10.2px;line-height:13.26px;color:#484848;font-weight:bold;left:656.50px;">РК</div>
<div class="t" style="top:473.94px;font-size:10.2px;line-height:13.26px;color:#484848;font-weight:bold;left:656.50px;">итого</div>
<div class="t" style="top:410.04px;font-size:10.2px;line-height:13.26px;color:#484848;font-weight:bold;left:760.40px;">НДФЛ 15% (по</div>
<div class="t" style="top:421.94px;font-size:10.2px;line-height:13.26px;color:#484848;font-weight:bold;left:760.40px;">справке</div>
<div class="t" style="top:433.84px;font-size:10.2px;line-height:13.26px;color:#484848;font-weight:bold;left:760.40px;">2-НДФЛ)</div>
<div class="t" style="top:447.54px;font-size:10.2px;line-height:13.26px;color:#484848;font-weight:bold;left:760.40px;">не РК</div>
<div class="t" style="top:460.74px;font-size:10.2px;line-height:13.26px;color:#484848;font-weight:bold;left:760.40px;">РК</div>
<div class="t" style="top:473.94px;font-size:10.2px;line-height:13.26px;color:#484848;font-weight:bold;left:760.40px;">итого</div>
<div class="t" style="top:410.04px;font-size:10.2px;line-height:13.26px;color:#484848;font-weight:bold;left:840.20px;">Разница 15% (по</div>
<div class="t" style="top:421.94px;font-size:10.2px;line-height:13.26px;color:#484848;font-weight:bold;left:840.20px;">своду - по справке</div>
<div class="t" style="top:433.84px;font-size:10.2px;line-height:13.26px;color:#484848;font-weight:bold;left:840.20px;">2-НДФЛ)</div>
<div class="t" style="top:447.54px;font-size:10.2px;line-height:13.26px;color:#484848;font-weight:bold;left:840.20px;">не РК</div>
<div class="t" style="top:460.74px;font-size:10.2px;line-height:13.26px;color:#484848;font-weight:bold;left:840.20px;">РК</div>
<div class="t" style="top:473.94px;font-size:10.2px;line-height:13.26px;color:#484848;font-weight:bold;left:840.20px;">итого</div>
<div class="t" style="top:410.04px;font-size:10.2px;line-height:13.26px;color:#484848;font-weight:bold;left:945.40px;">НДФЛ 18% (по</div>
<div class="t" style="top:421.94px;font-size:10.2px;line-height:13.26px;color:#484848;font-weight:bold;left:945.40px;">справке</div>
<div class="t" style="top:433.84px;font-size:10.2px;line-height:13.26px;color:#484848;font-weight:bold;left:945.40px;">2-НДФЛ)</div>
<div class="t" style="top:447.54px;font-size:10.2px;line-height:13.26px;color:#484848;font-weight:bold;left:945.40px;">не РК</div>
<div class="t" style="top:460.74px;font-size:10.2px;line-height:13.26px;color:#484848;font-weight:bold;left:945.40px;">РК</div>
<div class="t" style="top:473.94px;font-size:10.2px;line-height:13.26px;color:#484848;font-weight:bold;left:945.40px;">итого</div>
<div class="t" style="top:486.94px;font-size:10.6px;line-height:13.78px;color:#4c4c4c;letter-spacing:-0.127px;right:588.50px;text-align:right;transform:scaleX(0.9434);transform-origin:100% 0;">82 500</div>
<div class="t" style="top:486.94px;font-size:10.6px;line-height:13.78px;color:#4c4c4c;letter-spacing:-0.127px;right:373.80px;text-align:right;transform:scaleX(0.9434);transform-origin:100% 0;">10 000</div>
<div class="t" style="top:499.74px;font-size:10.6px;line-height:13.78px;color:#4c4c4c;letter-spacing:-0.127px;right:588.50px;text-align:right;transform:scaleX(0.9434);transform-origin:100% 0;">74 250</div>
<div class="t" style="top:499.74px;font-size:10.6px;line-height:13.78px;color:#4c4c4c;letter-spacing:-0.127px;right:373.80px;text-align:right;transform:scaleX(0.9434);transform-origin:100% 0;">9 653</div>
<div class="t" style="top:512.64px;font-size:10.6px;line-height:13.78px;color:#4c4c4c;letter-spacing:-0.127px;right:588.50px;text-align:right;transform:scaleX(0.9434);transform-origin:100% 0;">156 750</div>
<div class="t" style="top:512.64px;font-size:10.6px;line-height:13.78px;color:#4c4c4c;letter-spacing:-0.127px;right:373.80px;text-align:right;transform:scaleX(0.9434);transform-origin:100% 0;">19 653</div>
</div></div>
</body></html>
